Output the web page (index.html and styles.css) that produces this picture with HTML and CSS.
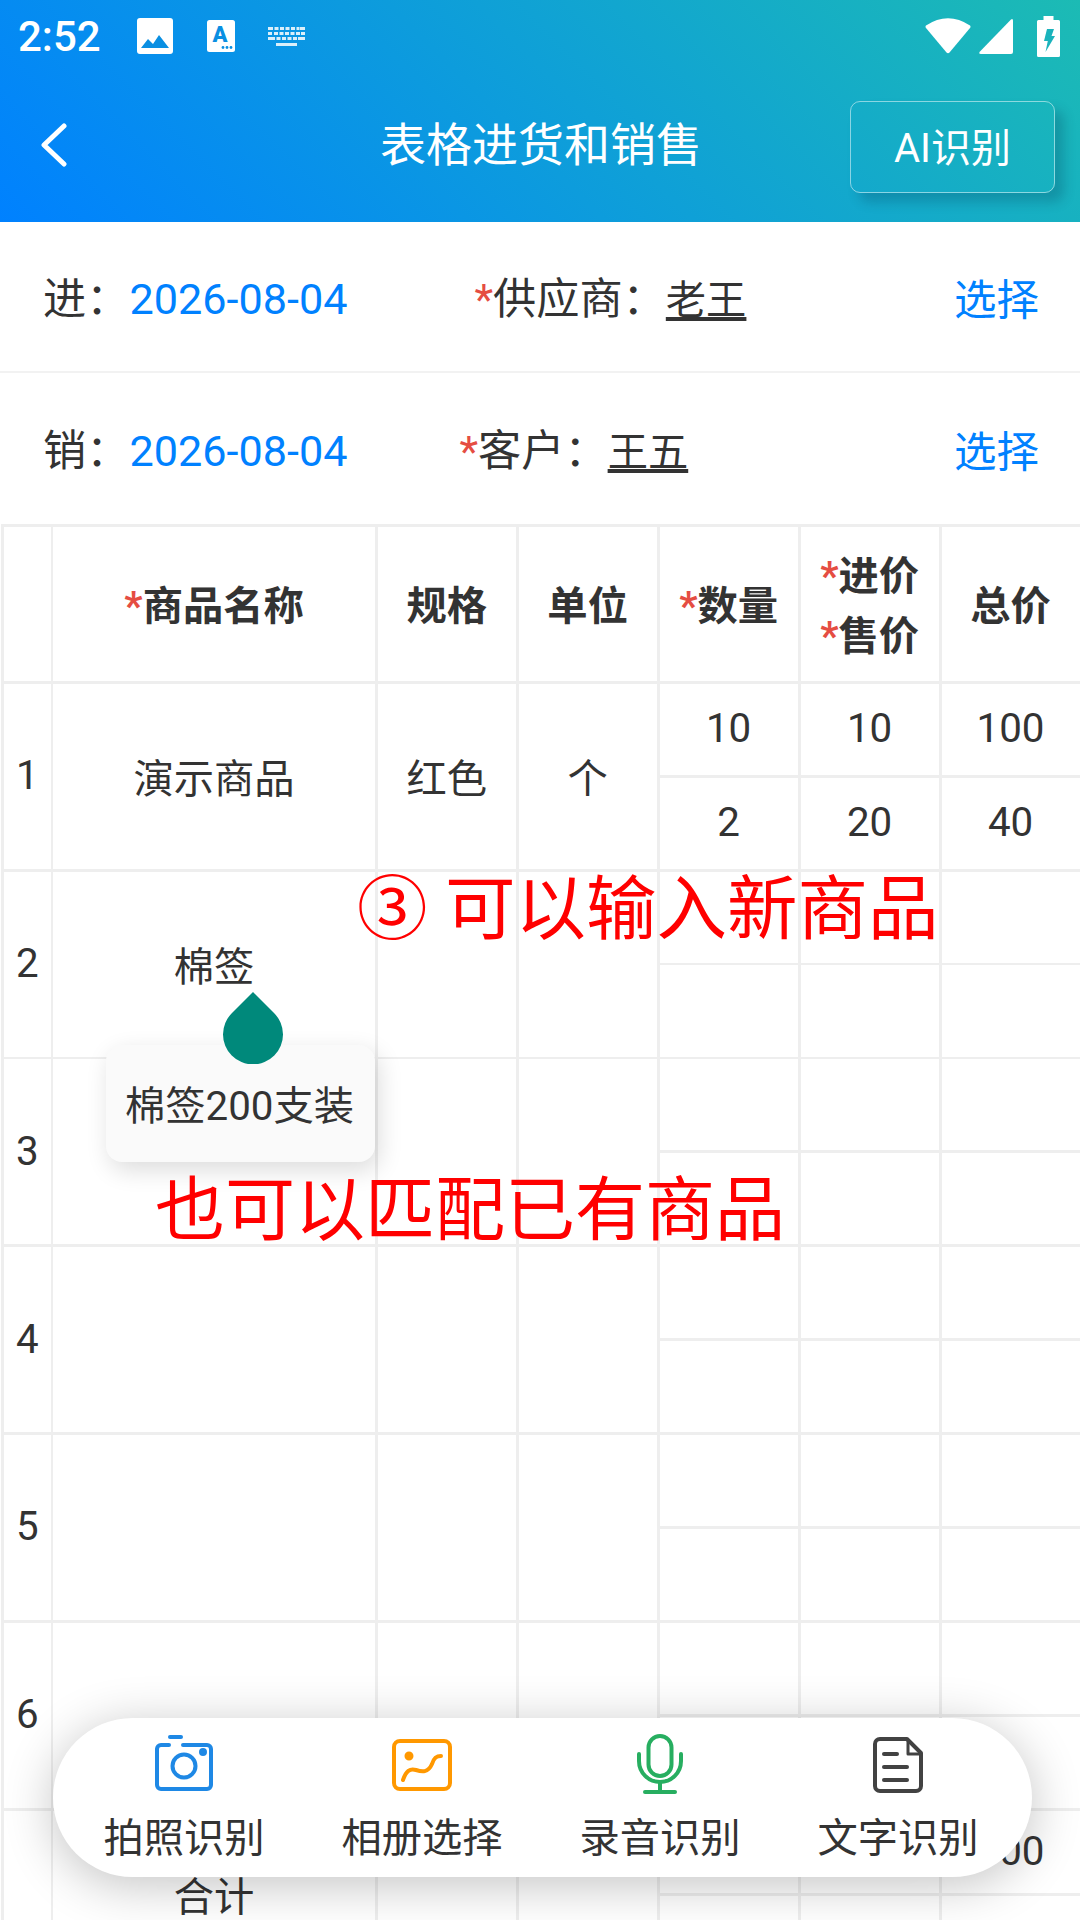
FILE: index.html
```html
<!DOCTYPE html>
<html lang="zh-CN">
<head>
<meta charset="utf-8">
<title>表格进货和销售</title>
<link rel="stylesheet" href="styles.css">
</head>
<body>
<div class="page">
  <header class="header">
    <div class="status-bar">
      <span class="clock">2:52</span>
      <svg class="st-gallery" viewBox="0 0 36 36"><rect width="36" height="36" rx="3" fill="#fff"/><path d="M4 30 L11 21 L16 26 L22 17 L32 30 Z" fill="#0a8fe2"/></svg>
      <svg class="st-font" viewBox="0 0 28 32"><rect width="28" height="32" rx="2.5" fill="#fff"/><text x="13" y="22" class="st-font-letter">A</text><circle cx="16" cy="27.5" r="1.4" fill="#0a8fe2"/><circle cx="20" cy="27.5" r="1.4" fill="#0a8fe2"/><circle cx="24" cy="27.5" r="1.4" fill="#0a8fe2"/></svg>
      <svg class="st-keyboard" viewBox="0 0 37 20" fill="#fff" opacity=".85">
        <path d="M0 0h5v3H0zM6.500 0h4v3h-4zM12 0h4v3h-4zM17.500 0h4v3h-4zM23 0h4v3h-4zM28.500 0h3v3h-3zM32 0h5v3h-5z"/>
        <path d="M0 5h4v3H0zM6 5h4v3H6zM11.500 5h4v3h-4zM17 5h4v3h-4zM22.500 5h4v3h-4zM28 5h4v3h-4zM33 5h4v3h-4z"/>
        <path d="M0 10h7v3H0zM8.500 10h4v3h-4zM14 10h4v3h-4zM19.500 10h4v3h-4zM25 10h4v3h-4zM30 10h7v3h-7z"/>
        <path d="M8 16h21v3H8z"/>
      </svg>
      <span class="status-spacer"></span>
      <svg class="st-wifi" viewBox="0 0 46 38"><path d="M1 9.500 Q23 -5 45 9.500 Q46 10.500 45 12 L24.500 36.500 Q23 38 21.500 36.500 L1 12 Q0 10.500 1 9.500 Z" fill="#fff"/></svg>
      <svg class="st-signal" viewBox="0 0 34 36"><path d="M32 1.500 Q34 0 34 3 V34 Q34 36 32 36 H2 Q-1 36 1 33.500 Z" fill="#fff"/></svg>
      <svg class="st-battery" viewBox="0 0 23 41"><path d="M6.500 0h10v4h5a1.500 1.500 0 0 1 1.500 1.500V39.500A1.500 1.500 0 0 1 21.500 41H1.500A1.500 1.500 0 0 1 0 39.500V5.500A1.500 1.500 0 0 1 1.500 4h5z" fill="#fff"/><path d="M10 13 H17 L14.500 20 H18 L8.500 36 L10.800 25 H7 Z" fill="#1ab3bc"/></svg>
    </div>
    <nav class="nav">
      <svg class="back" viewBox="0 0 26 44"><path d="M23 3 L3 22 L23 41" fill="none" stroke="#fff" stroke-width="5" stroke-linecap="round" stroke-linejoin="round"/></svg>
      <h1 class="title">表格进货和销售</h1>
      <button class="ai-button">AI识别</button>
    </nav>
  </header>

  <section class="form-row form-row-first">
    <span class="label">进：</span><span class="date">2026-08-04</span>
    <span class="party party-supplier"><i class="req">*</i>供应商：<u class="party-name">老王</u></span>
    <span class="pick">选择</span>
  </section>
  <section class="form-row">
    <span class="label">销：</span><span class="date">2026-08-04</span>
    <span class="party party-customer"><i class="req">*</i>客户：<u class="party-name">王五</u></span>
    <span class="pick">选择</span>
  </section>

  <section class="sheet">
    <div class="cell head"></div>
    <div class="cell head"><span><i class="req">*</i>商品名称</span></div>
    <div class="cell head">规格</div>
    <div class="cell head">单位</div>
    <div class="cell head"><span><i class="req">*</i>数量</span></div>
    <div class="cell head"><span><i class="req">*</i>进价</span><span><i class="req">*</i>售价</span></div>
    <div class="cell head">总价</div>

    <div class="cell tall">1</div>
    <div class="cell tall">演示商品</div>
    <div class="cell tall">红色</div>
    <div class="cell tall">个</div>
    <div class="cell">10</div><div class="cell">10</div><div class="cell">100</div>
    <div class="cell">2</div><div class="cell">20</div><div class="cell">40</div>

    <div class="cell tall">2</div>
    <div class="cell tall">棉签</div>
    <div class="cell tall"></div>
    <div class="cell tall"></div>
    <div class="cell"></div><div class="cell"></div><div class="cell"></div>
    <div class="cell"></div><div class="cell"></div><div class="cell"></div>

    <div class="cell tall">3</div>
    <div class="cell tall"></div>
    <div class="cell tall"></div>
    <div class="cell tall"></div>
    <div class="cell"></div><div class="cell"></div><div class="cell"></div>
    <div class="cell"></div><div class="cell"></div><div class="cell"></div>

    <div class="cell tall">4</div>
    <div class="cell tall"></div>
    <div class="cell tall"></div>
    <div class="cell tall"></div>
    <div class="cell"></div><div class="cell"></div><div class="cell"></div>
    <div class="cell"></div><div class="cell"></div><div class="cell"></div>

    <div class="cell tall">5</div>
    <div class="cell tall"></div>
    <div class="cell tall"></div>
    <div class="cell tall"></div>
    <div class="cell"></div><div class="cell"></div><div class="cell"></div>
    <div class="cell"></div><div class="cell"></div><div class="cell"></div>

    <div class="cell tall">6</div>
    <div class="cell tall"></div>
    <div class="cell tall"></div>
    <div class="cell tall"></div>
    <div class="cell"></div><div class="cell"></div><div class="cell"></div>
    <div class="cell"></div><div class="cell"></div><div class="cell"></div>

    <div class="cell tall"></div>
    <div class="cell tall">合计</div>
    <div class="cell tall"></div>
    <div class="cell tall"></div>
    <div class="cell"></div><div class="cell"></div><div class="cell">100</div>
    <div class="cell"></div><div class="cell"></div><div class="cell"></div>
  </section>

  <!-- autocomplete suggestion with the text-cursor handle above it -->
  <div class="suggest">棉签200支装</div>
  <svg class="handle" viewBox="0 0 60 72"><path d="M30 0 L51 21 A30 30 0 1 1 9 21 Z" fill="#00897b"/></svg>

  <p class="note note-new">③ 可以输入新商品</p>
  <p class="note note-match">也可以匹配已有商品</p>

  <!-- floating capture toolbar -->
  <div class="toolbar">
    <div class="tool">
      <svg class="tool-icon" width="60" height="56" viewBox="0 2 60 56" fill="none" stroke="#1e88e5" stroke-width="4" stroke-linecap="round" stroke-linejoin="round">
        <path d="M16 2 H27"/>
        <path d="M15 10 H7 a4 4 0 0 0 -4 4 V50 a4 4 0 0 0 4 4 H53 a4 4 0 0 0 4 -4 V14 a4 4 0 0 0 -4 -4 H29"/>
        <circle cx="30" cy="31" r="11.500"/>
        <circle cx="49" cy="17" r="2" fill="#1e88e5"/>
      </svg>
      <span class="tool-label">拍照识别</span>
    </div>
    <div class="tool">
      <svg class="tool-icon" width="60" height="56" viewBox="0 0 60 56" fill="none" stroke="#ff9800" stroke-width="4" stroke-linecap="round" stroke-linejoin="round">
        <rect x="2" y="4" width="56" height="48" rx="6"/>
        <circle cx="17" cy="19" r="2.500" fill="#ff9800"/>
        <path d="M11 43 C14 34 18 31 24 33 S36 36 40 27 C42 20 45 19 49 19"/>
      </svg>
      <span class="tool-label">相册选择</span>
    </div>
    <div class="tool">
      <svg class="tool-icon" width="48" height="62" viewBox="0 0 48 62" fill="none" stroke="#27ae60" stroke-width="4" stroke-linecap="round" stroke-linejoin="round">
        <rect x="12.500" y="2" width="23" height="40" rx="11.500"/>
        <path d="M3 20 V27 a21 21 0 0 0 42 0 V20"/>
        <path d="M24 48 V57"/>
        <path d="M9 58 H39"/>
      </svg>
      <span class="tool-label">录音识别</span>
    </div>
    <div class="tool">
      <svg class="tool-icon" width="52" height="58" viewBox="0 0 52 58" fill="none" stroke="#424242" stroke-width="4" stroke-linecap="round" stroke-linejoin="round">
        <path d="M8 3 H35 L49 17 V50 a5 5 0 0 1 -5 5 H8 a5 5 0 0 1 -5 -5 V8 a5 5 0 0 1 5 -5 Z"/>
        <path d="M36 4 V18 H48" stroke-width="3"/>
        <path d="M12 18 H25"/>
        <path d="M12 31 H35"/>
        <path d="M12 44 H35"/>
      </svg>
      <span class="tool-label">文字识别</span>
    </div>
  </div>
</div>
</body>
</html>
```

FILE: styles.css
```css
* {
  box-sizing: border-box;
}

html,
body {
  margin: 0;
  padding: 0;
}

body {
  font-family: Roboto, "Noto Sans CJK SC", sans-serif;
  color: #333;
  background: #fff;
}

.page {
  position: relative;
  width: 1080px;
  height: 1920px;
  overflow: hidden;
}

i {
  font-style: normal;
}

/* Gradient header with system status row and page navigation */
.header {
  height: 222px;
  background: linear-gradient(45deg, #0081ff, #1cbbb4);
  color: #fff;
}

.status-bar {
  display: flex;
  align-items: center;
  height: 72px;
  padding: 0 20px 0 18px;
}

.clock {
  font-size: 42px;
  font-weight: 500;
  line-height: 1;
  padding-top: 2px;
  margin-right: 36px;
}

.st-gallery {
  width: 36px;
  height: 36px;
  margin-right: 34px;
}

.st-font {
  width: 28px;
  height: 32px;
  margin-right: 33px;
}

.st-font-letter {
  font-family: Roboto, sans-serif;
  font-size: 22px;
  font-weight: 900;
  fill: #0a8fe2;
  text-anchor: middle;
}

.st-keyboard {
  width: 37px;
  height: 20px;
  margin-top: 2px;
}

.status-spacer {
  flex: 1;
}

.st-wifi {
  width: 46px;
  height: 38px;
  margin-right: 8px;
  margin-bottom: 2px;
}

.st-signal {
  width: 34px;
  height: 36px;
  margin-right: 24px;
}

.st-battery {
  width: 23px;
  height: 41px;
}

.nav {
  display: grid;
  grid-template-columns: 1fr auto 1fr;
  align-items: center;
  height: 150px;
  padding: 0 25px 0 41px;
}

.back {
  width: 26px;
  height: 44px;
  margin-bottom: 4px;
}

.title {
  margin: 0 0 5px;
  font-size: 46px;
  font-weight: 400;
  line-height: 1;
  transform: translateX(-7px);
}

.ai-button {
  justify-self: end;
  width: 205px;
  height: 92px;
  margin: 0;
  padding: 0 0 5px;
  font: inherit;
  font-size: 40px;
  color: #fff;
  background: transparent;
  border: 1px solid rgba(255, 255, 255, 0.5);
  border-radius: 10px;
  box-shadow: 9px 9px 12px rgba(0, 40, 70, 0.22);
}

/* Date and counterparty rows */
.form-row {
  display: flex;
  align-items: center;
  height: 151px;
  padding: 0 41px 0 43px;
  font-size: 43.2px;
}

.form-row-first {
  border-bottom: 2px solid #f2f2f2;
}

.label,
.party {
  padding-bottom: 3px;
}

.date {
  padding-top: 5px;
  color: #0081ff;
}

.party-supplier {
  margin-left: 127px;
}

.party-customer {
  margin-left: 112px;
}

.req {
  color: #e54d42;
}

.party-name {
  font-size: 40.3px;
  text-decoration: underline;
}

.pick {
  margin-left: auto;
  font-size: 42.5px;
  color: #0081ff;
}

/* Goods table: each numbered row spans two price sub-rows */
.sheet {
  display: grid;
  grid-template-columns: 46.5px 321.4px repeat(5, 138.1px);
  grid-template-rows: 154px repeat(12, 91.04px) 82.1px 82.1px;
  gap: 2.88px;
  width: 1080px;
  margin-left: 1px;
  padding: 2.88px 0 0 3px;
  background: #eee;
  font-size: 40.3px;
}

.cell {
  display: flex;
  flex-direction: column;
  align-items: center;
  justify-content: center;
  padding-bottom: 1px;
  background: #fff;
}

.tall {
  grid-row: span 2;
}

.head {
  padding: 6px 0 0;
  font-weight: 700;
  line-height: 60px;
}

/* Suggestion popup */
.suggest {
  position: absolute;
  left: 106px;
  top: 1045px;
  display: flex;
  align-items: center;
  justify-content: center;
  width: 269px;
  height: 117px;
  padding: 0 2px 2px 0;
  font-size: 40.3px;
  background: #fafafa;
  border-radius: 16px;
  box-shadow: 4px 8px 24px rgba(0, 0, 0, 0.14);
}

.handle {
  position: absolute;
  left: 223px;
  top: 992px;
  width: 60px;
  height: 72px;
}

/* Red callouts over the table */
.note {
  position: absolute;
  margin: 0;
  line-height: 1;
  color: #f00;
  white-space: nowrap;
}

.note-new {
  left: 357px;
  top: 875px;
  font-size: 70.5px;
}

.note-match {
  left: 155px;
  top: 1176px;
  font-size: 70px;
}

/* Floating toolbar */
.toolbar {
  position: absolute;
  left: 53px;
  top: 1718px;
  display: flex;
  justify-content: center;
  width: 979px;
  height: 159px;
  padding-right: 3px;
  background: #fff;
  border-radius: 80px;
  box-shadow: 0 8px 50px rgba(0, 0, 0, 0.24);
}

.tool {
  display: flex;
  flex-direction: column;
  align-items: center;
  width: 238px;
}

.tool-icon {
  flex: none;
  height: 62px;
  margin-top: 16px;
}

.tool-label {
  margin-top: 15px;
  font-size: 40.3px;
  line-height: 56px;
  color: #333;
}
```
